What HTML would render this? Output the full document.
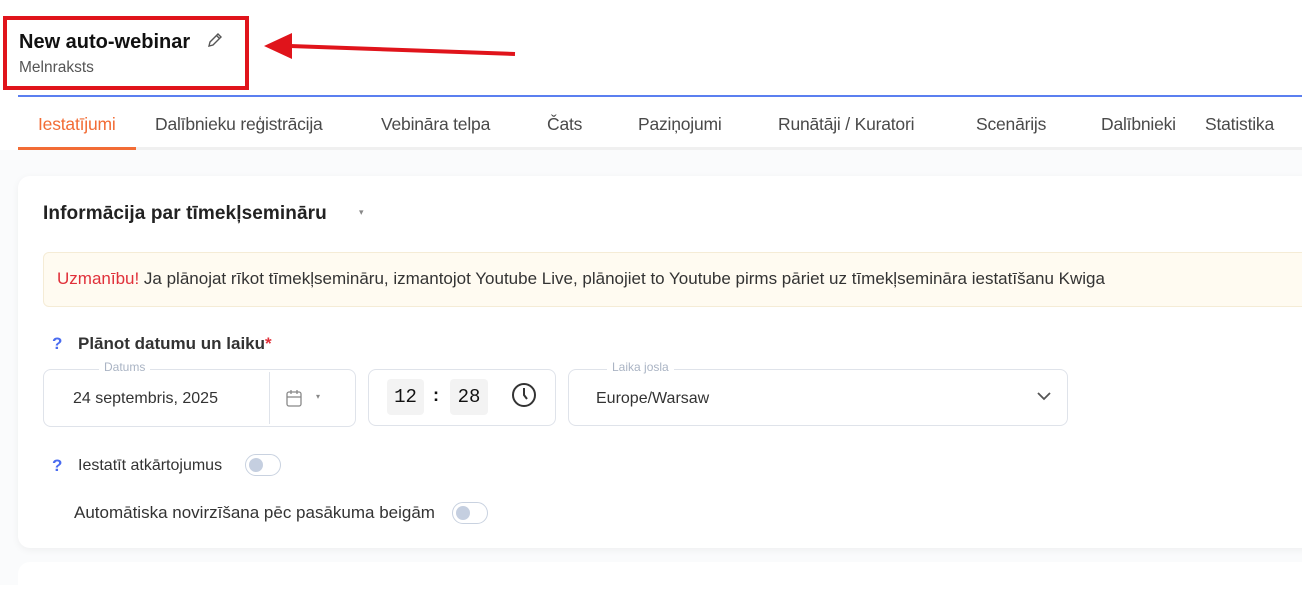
<!DOCTYPE html>
<html><head><meta charset="utf-8"><style>
*{margin:0;padding:0;box-sizing:border-box}
body{width:1302px;height:585px;overflow:hidden;background:#fff;font-family:"Liberation Sans",sans-serif;position:relative;color:#333}
.a{position:absolute;white-space:nowrap}
.tab{position:absolute;top:114px;font-size:17.5px;color:#4a4a4a;letter-spacing:-0.2px}
.box{position:absolute;border:1px solid #dfe3ea;border-radius:8px;background:#fff}
.tog{position:absolute;width:36px;height:22px;border:1px solid #c9d2e0;border-radius:11px;background:#fff}
.tog:after{content:"";position:absolute;left:3px;top:3px;width:14px;height:14px;border-radius:50%;background:#c5cfe0}
</style></head><body>
<div class="a" style="left:3px;top:16px;width:246px;height:74px;border:4px solid #e0141b"></div>
<div class="a" style="left:19px;top:31px;font-size:20px;font-weight:bold;color:#111">New auto-webinar</div>
<svg class="a" style="left:206px;top:31px" width="18" height="18" viewBox="0 0 18 18"><path d="M3 15l1-4 8-8 3 3-8 8z M10.5 4.5l3 3" fill="none" stroke="#555" stroke-width="1.4"/></svg>
<div class="a" style="left:19px;top:59px;font-size:15.5px;color:#555">Melnraksts</div>
<svg class="a" style="left:262px;top:30px" width="255" height="32"><polygon points="2,16 30,3 30,29" fill="#e0141b"/><line x1="28" y1="16" x2="253" y2="24" stroke="#e0141b" stroke-width="4"/></svg>
<div class="a" style="left:18px;top:95px;width:1284px;height:2px;background:#5b7ff0"></div>
<div class="tab" style="left:38px;color:#f26c35">Iestatījumi</div>
<div class="tab" style="left:155px">Dalībnieku reģistrācija</div>
<div class="tab" style="left:381px">Vebināra telpa</div>
<div class="tab" style="left:547px">Čats</div>
<div class="tab" style="left:638px">Paziņojumi</div>
<div class="tab" style="left:778px">Runātāji / Kuratori</div>
<div class="tab" style="left:976px">Scenārijs</div>
<div class="tab" style="left:1101px">Dalībnieki</div>
<div class="tab" style="left:1205px">Statistika</div>
<div class="a" style="left:18px;top:147px;width:1284px;height:3px;background:#f0f0f0"></div>
<div class="a" style="left:18px;top:147px;width:118px;height:3px;background:#f26c35"></div>
<div class="a" style="left:0;top:150px;width:1302px;height:435px;background:#fafbfc"></div>
<div class="a" style="left:18px;top:176px;width:1300px;height:372px;background:#fff;border-radius:12px;box-shadow:0 2px 8px rgba(0,0,0,.05)"></div>
<div class="a" style="left:18px;top:562px;width:1300px;height:40px;background:#fff;border-radius:12px"></div>
<div class="a" style="left:43px;top:203px;font-size:19px;font-weight:bold;color:#222;letter-spacing:0.1px">Informācija par tīmekļsemināru</div>
<div class="a" style="left:359px;top:207px;font-size:9px;color:#888">▾</div>
<div class="a" style="left:43px;top:252px;width:1270px;height:55px;background:#fffbf1;border:1px solid #f5ecd6;border-radius:6px"></div>
<div class="a" style="left:57px;top:269px;font-size:17px;color:#333"><span style="color:#e0303a">Uzmanību!</span> Ja plānojat rīkot tīmekļsemināru, izmantojot Youtube Live, plānojiet to Youtube pirms pāriet uz tīmekļsemināra iestatīšanu Kwiga</div>
<div class="a" style="left:52px;top:334px;font-size:17px;font-weight:bold;color:#4a6cf0">?</div>
<div class="a" style="left:78px;top:334px;font-size:17px;font-weight:bold;color:#333">Plānot datumu un laiku<span style="color:#e0303a">*</span></div>
<div class="box" style="left:43px;top:369px;width:313px;height:58px"></div>
<div class="a" style="left:99px;top:360px;font-size:12px;color:#aab4c4;background:#fff;padding:0 5px">Datums</div>
<div class="a" style="left:73px;top:390px;font-size:16px;color:#333">24 septembris, 2025</div>
<div class="a" style="left:269px;top:372px;width:1px;height:52px;background:#dfe3ea"></div>
<svg class="a" style="left:285px;top:389px" width="18" height="19" viewBox="0 0 18 19"><rect x="2" y="3" width="14" height="14" rx="2" fill="none" stroke="#888" stroke-width="1.3"/><line x1="2" y1="8" x2="16" y2="8" stroke="#888" stroke-width="1.3"/><line x1="6" y1="1" x2="6" y2="5" stroke="#888" stroke-width="1.3"/><line x1="12" y1="1" x2="12" y2="5" stroke="#888" stroke-width="1.3"/></svg>
<div class="a" style="left:316px;top:392px;font-size:8px;color:#888">▾</div>
<div class="box" style="left:368px;top:369px;width:188px;height:57px"></div>
<div class="a" style="left:387px;top:379px;width:37px;height:36px;background:#f3f3f3;border-radius:4px;font:19px 'Liberation Mono',monospace;color:#111;text-align:center;line-height:37px">12</div>
<div class="a" style="left:433px;top:385px;font-size:18px;font-weight:bold;color:#111">:</div>
<div class="a" style="left:450px;top:379px;width:38px;height:36px;background:#f3f3f3;border-radius:4px;font:19px 'Liberation Mono',monospace;color:#111;text-align:center;line-height:37px">28</div>
<svg class="a" style="left:511px;top:382px" width="26" height="26" viewBox="0 0 26 26"><circle cx="13" cy="13" r="11" fill="none" stroke="#333" stroke-width="2"/><path d="M13 6v7l3 4" fill="none" stroke="#333" stroke-width="2"/></svg>
<div class="box" style="left:568px;top:369px;width:500px;height:57px"></div>
<div class="a" style="left:607px;top:360px;font-size:12px;color:#aab4c4;background:#fff;padding:0 5px">Laika josla</div>
<div class="a" style="left:596px;top:390px;font-size:16px;color:#333">Europe/Warsaw</div>
<svg class="a" style="left:1036px;top:390px" width="16" height="12"><path d="M2 3l6 6 6-6" fill="none" stroke="#555" stroke-width="1.8"/></svg>
<div class="a" style="left:52px;top:456px;font-size:17px;font-weight:bold;color:#4a6cf0">?</div>
<div class="a" style="left:78px;top:457px;font-size:16px;color:#333">Iestatīt atkārtojumus</div>
<div class="tog" style="left:245px;top:454px"></div>
<div class="a" style="left:74px;top:503px;font-size:17px;color:#333">Automātiska novirzīšana pēc pasākuma beigām</div>
<div class="tog" style="left:452px;top:502px"></div>
</body></html>
